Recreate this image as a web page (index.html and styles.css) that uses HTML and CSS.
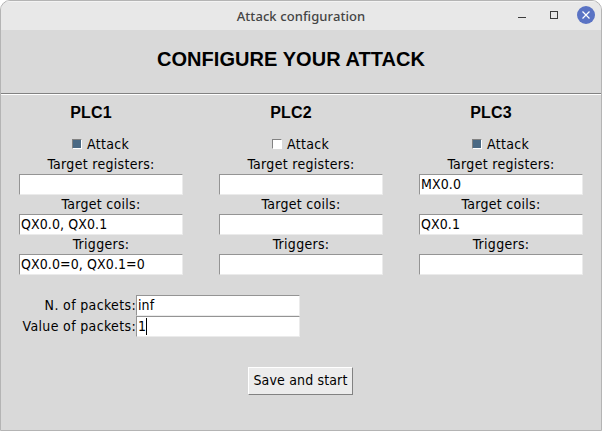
FILE: index.html
```html
<!DOCTYPE html>
<html lang="en">
<head>
<meta charset="utf-8">
<title>Attack configuration</title>
<link rel="stylesheet" href="styles.css">
</head>
<body>
<div class="window">
  <header class="titlebar">
    <span class="title">Attack configuration</span>
    <div class="controls">
      <svg width="84" height="29" viewBox="0 0 84 29">
        <path d="M1 16.5h8" stroke="#3c3c3c" fill="none"/>
        <rect x="33.5" y="10.5" width="7" height="7" fill="none" stroke="#3c3c3c"/>
        <circle cx="69" cy="14" r="9" fill="#5a73c4"/>
        <path d="M65.5 10.5l7 7M72.5 10.5l-7 7" stroke="#fff" stroke-width="1.2"/>
      </svg>
    </div>
  </header>
  <h1 class="heading">CONFIGURE YOUR ATTACK</h1>
  <div class="separator"></div>
  <main class="plcs">
    <section class="plc">
      <h2>PLC1</h2>
      <div class="check"><i class="box on"></i>Attack</div>
      <div class="label">Target registers:</div><div class="entry"></div>
      <div class="label">Target coils:</div><div class="entry">QX0.0, QX0.1</div>
      <div class="label">Triggers:</div><div class="entry">QX0.0=0, QX0.1=0</div>
    </section>
    <section class="plc">
      <h2>PLC2</h2>
      <div class="check"><i class="box"></i>Attack</div>
      <div class="label">Target registers:</div><div class="entry"></div>
      <div class="label">Target coils:</div><div class="entry"></div>
      <div class="label">Triggers:</div><div class="entry"></div>
    </section>
    <section class="plc">
      <h2>PLC3</h2>
      <div class="check"><i class="box on"></i>Attack</div>
      <div class="label">Target registers:</div><div class="entry">MX0.0</div>
      <div class="label">Target coils:</div><div class="entry">QX0.1</div>
      <div class="label">Triggers:</div><div class="entry"></div>
    </section>
  </main>
  <div class="packets">
    <div class="name">N. of packets:</div><div class="entry">inf</div>
    <div class="name">Value of packets:</div><div class="entry">1<i class="caret"></i></div>
  </div>
  <div class="save">Save and start</div>
</div>
</body>
</html>
```

FILE: styles.css
```css
* { box-sizing: border-box; }
body { margin: 0; background: #fff; font: 14px/20px "DejaVu Sans Condensed", "DejaVu Sans", sans-serif; font-stretch: condensed; color: #000; }
.window { width: 602px; height: 431px; background: #d9d9d9; border: 1px solid #b4b4b4; border-radius: 10px 10px 0 0; overflow: hidden; display: flex; flex-direction: column; }
.titlebar { height: 29px; flex: none; background: #e8e8e8; border-top: 1px solid #f3f3f3; display: grid; grid-template-columns: 84px 1fr 84px; }
.title { grid-column: 2; text-align: center; font: 500 13px/28px "Noto Sans", sans-serif; letter-spacing: 0.08px; color: #444; }
.controls { height: 29px; margin-top: -1px; }
.controls svg { display: block; }
.heading { margin: 0; height: 63px; font: bold 20px/58px "Liberation Sans", Arial, sans-serif; letter-spacing: 0.05px; text-align: center; padding-right: 20px; flex: none; }
.separator { height: 2px; border-top: 1px solid #828282; border-bottom: 1px solid #fff; flex: none; }
.plcs { display: grid; grid-template-columns: repeat(3, 200px); flex: none; }
.plc { padding: 0 18px; }
.plc h2 { margin: 0; height: 39px; padding-right: 20px; font: bold 16px/35px "Liberation Sans", Arial, sans-serif; letter-spacing: 0.15px; text-align: center; }
.check { height: 20px; margin-bottom: 1px; display: flex; align-items: center; justify-content: center; gap: 5px; padding-right: 1px; letter-spacing: 0.3px; }
.box { width: 10px; height: 10px; background: #fff; border: 1px solid; border-color: #828282 #fff #fff #828282; }
.box.on { background: #4a6984; }
.label { height: 19px; line-height: 18px; text-align: center; letter-spacing: 0.3px; }
.entry { display: flex; align-items: center; width: 164px; height: 21px; padding: 0 0 1px 1px; line-height: 18px; background: #fff; border: 1px solid; border-color: #949494 #ebebeb #ebebeb #949494; letter-spacing: 0.1px; white-space: pre; }
.caret { width: 1px; height: 17px; background: #000; }
.packets { display: grid; grid-template-columns: 135px 164px; grid-auto-rows: 21px; margin-top: 20px; flex: none; }
.name { text-align: right; line-height: 21px; letter-spacing: 0.35px; }
.save { width: 105px; height: 28px; flex: none; margin: 30px 0 0 247px; background: #ececec; border: 1px solid; border-color: #fff #828282 #828282 #fff; text-align: center; line-height: 24px; letter-spacing: 0.15px; }
```
